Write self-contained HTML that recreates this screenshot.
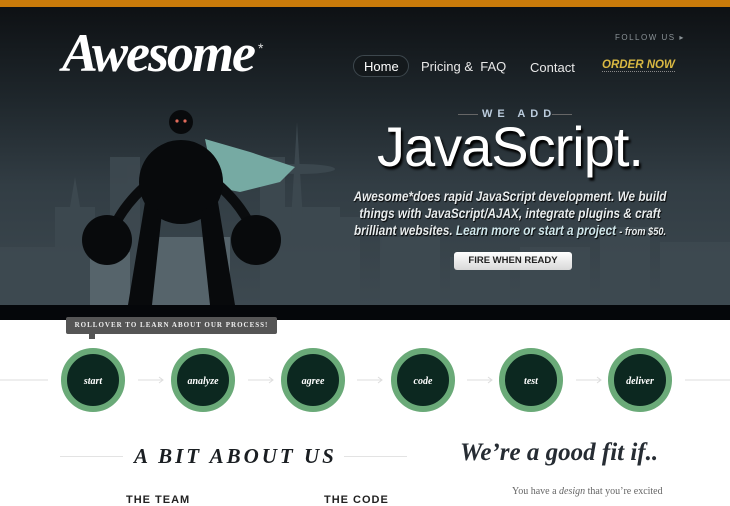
<!DOCTYPE html>
<html><head><meta charset="utf-8"><style>
*{margin:0;padding:0;box-sizing:border-box}
body{width:730px;height:500px;overflow:hidden;background:#fff;font-family:"Liberation Sans",sans-serif;position:relative}
.abs{position:absolute}
.pl{position:absolute;white-space:nowrap;font-size:14px;font-style:italic;font-weight:bold;color:#e8eced;text-shadow:1px 1px 1px #000;transform-origin:center top;transform:scaleX(0.84)}
</style></head><body>
<div class="abs" style="left:0;top:0;width:730px;height:7px;background:#c97b0a"></div>
<div class="abs" style="left:0;top:7px;width:730px;height:298px;background:linear-gradient(#0e1114 0%,#1e262b 30%,#323d44 60%,#3d4950 100%)"></div>
<svg class="abs" style="left:0;top:7px" width="730" height="298">
<g fill="#3e4a51" opacity="0.85">
<rect x="0" y="240" width="60" height="58"/><rect x="55" y="200" width="40" height="98"/><rect x="110" y="150" width="30" height="148"/>
<polygon points="70,200 75,170 80,200"/>
<rect x="280" y="200" width="60" height="98"/><rect x="260" y="150" width="25" height="148"/>
<polygon points="290,230 297,115 304,230"/><ellipse cx="300" cy="162" rx="35" ry="5"/>
<rect x="300" y="210" width="60" height="88"/><rect x="380" y="230" width="60" height="68"/>
<rect x="450" y="250" width="60" height="48"/><rect x="520" y="240" width="70" height="58"/>
<rect x="600" y="220" width="50" height="78"/><rect x="660" y="235" width="70" height="63"/>
</g>
<g fill="#56646b"><rect x="150" y="230" width="80" height="68"/><rect x="90" y="245" width="40" height="53"/></g>
<polygon points="205,132 250,145 295,160 280,175 240,185 215,180" fill="#76aaa3"/>
<g fill="#080a0c">
<path d="M150,175 Q120,200 110,230" stroke="#0a0c0e" stroke-width="10" fill="none"/>
<path d="M215,175 Q245,200 255,230" stroke="#0a0c0e" stroke-width="10" fill="none"/>
<circle cx="181" cy="115" r="12"/>
<circle cx="181" cy="175" r="42"/>
<path d="M145,195 L128,298 L152,298 L162,205 Z"/>
<path d="M200,205 L210,298 L235,298 L218,195 Z"/>
<circle cx="107" cy="233" r="25"/><circle cx="256" cy="233" r="25"/>
</g>
<circle cx="177" cy="114" r="1.6" fill="#e06a5a"/><circle cx="185" cy="114" r="1.6" fill="#e06a5a"/>
</svg>
<div class="abs" style="left:62px;top:22px;font-family:'Liberation Serif',serif;font-style:italic;font-weight:bold;font-size:54px;color:#fff;letter-spacing:-2px">Awesome</div>
<div class="abs" style="left:258px;top:40px;color:#ddd;font-size:14px">*</div>
<div class="abs" style="left:615px;top:33px;font-size:8px;letter-spacing:1.5px;color:#8a9296">FOLLOW US ▸</div>
<div class="abs" style="left:353px;top:55px;width:56px;height:22px;border:1px solid #3d474d;border-radius:11px;background:#14191c"></div>
<div class="abs" style="left:364px;top:59px;font-size:13px;color:#fff">Home</div>
<div class="abs" style="left:421px;top:59px;font-size:13px;color:#e8e8e8">Pricing &amp; &nbsp;FAQ</div>
<div class="abs" style="left:530px;top:60px;font-size:13px;color:#e8e8e8">Contact</div>
<div class="abs" style="left:602px;top:59px;font-size:11.5px;color:#d9b842;font-weight:bold;font-style:italic;border-bottom:1px dotted #888">ORDER NOW</div>
<div class="abs" style="left:458px;top:114px;width:20px;height:1px;background:#666"></div>
<div class="abs" style="left:552px;top:114px;width:20px;height:1px;background:#666"></div>
<div class="abs" style="left:482px;top:108px;font-size:11px;letter-spacing:5px;color:#bcd;font-weight:bold">WE ADD</div>
<div class="abs" style="left:377px;top:114px;font-size:56px;color:#fff;letter-spacing:-1px;text-shadow:2px 3px 2px #000">JavaScript.</div>
<div class="pl" style="left:300px;width:420px;text-align:center;top:188px">Awesome*does rapid JavaScript development. We build</div>
<div class="pl" style="left:300px;width:420px;text-align:center;top:205px">things with JavaScript/AJAX, integrate plugins &amp; craft</div>
<div class="pl" style="left:300px;width:420px;text-align:center;top:222px">brilliant websites. <span style="color:#cfe6ea">Learn more or start a project</span> <span style="font-size:11px">- from $50.</span></div>
<div class="abs" style="left:454px;top:252px;width:118px;height:18px;border-radius:3px;background:linear-gradient(#fff,#d8d8d8);font-size:9.5px;font-weight:bold;color:#222;text-align:center;line-height:18px">FIRE WHEN READY</div>
<div class="abs" style="left:0;top:305px;width:730px;height:15px;background:#05070a"></div>
<div class="abs" style="left:66px;top:317px;width:211px;height:17px;background:#555;border-radius:2px;font-family:'Liberation Serif',serif;font-size:7px;letter-spacing:1px;color:#eee;text-align:center;line-height:17px;font-weight:bold">ROLLOVER TO LEARN ABOUT OUR PROCESS!</div>
<div class="abs" style="left:89px;top:334px;width:6px;height:5px;background:#555"></div>
<svg class="abs" style="left:0;top:340px" width="730" height="80">
<g stroke="#ddd" stroke-width="1" fill="none">
<line x1="0" y1="40" x2="48" y2="40"/><line x1="685" y1="40" x2="730" y2="40"/>
<path d="M138,40 H163 M159,37 L163,40 L159,43"/><path d="M248,40 H273 M269,37 L273,40 L269,43"/>
<path d="M357,40 H382 M378,37 L382,40 L378,43"/><path d="M467,40 H492 M488,37 L492,40 L488,43"/>
<path d="M576,40 H601 M597,37 L601,40 L597,43"/>
</g>
<g fill="#0c2820" stroke="#6aaa78" stroke-width="6">
<circle cx="93" cy="40" r="29"/><circle cx="203" cy="40" r="29"/><circle cx="313" cy="40" r="29"/>
<circle cx="423" cy="40" r="29"/><circle cx="531" cy="40" r="29"/><circle cx="640" cy="40" r="29"/>
</g>
<g fill="#fff" font-family="Liberation Serif,serif" font-style="italic" font-weight="bold" font-size="10" text-anchor="middle">
<text x="93" y="44">start</text><text x="203" y="44">analyze</text><text x="313" y="44">agree</text>
<text x="423" y="44">code</text><text x="531" y="44">test</text><text x="640" y="44">deliver</text>
</g>
</svg>
<div class="abs" style="left:60px;top:456px;width:63px;height:1px;background:#e3e3e3"></div>
<div class="abs" style="left:344px;top:456px;width:63px;height:1px;background:#e3e3e3"></div>
<div class="abs" style="left:134px;top:444px;font-family:'Liberation Serif',serif;font-style:italic;font-weight:bold;font-size:21px;letter-spacing:3px;color:#1a1e22">A BIT ABOUT US</div>
<div class="abs" style="left:460px;top:439px;font-family:'Liberation Serif',serif;font-style:italic;font-weight:bold;font-size:25px;color:#262c33">We’re a good fit if..</div>
<div class="abs" style="left:512px;top:486px;font-family:'Liberation Serif',serif;font-size:10px;color:#666">You have a <i>design</i> that you’re excited</div>
<div class="abs" style="left:126px;top:494px;font-size:11px;font-weight:bold;letter-spacing:1px;color:#222">THE TEAM</div>
<div class="abs" style="left:324px;top:494px;font-size:11px;font-weight:bold;letter-spacing:1px;color:#222">THE CODE</div>
</body></html>
